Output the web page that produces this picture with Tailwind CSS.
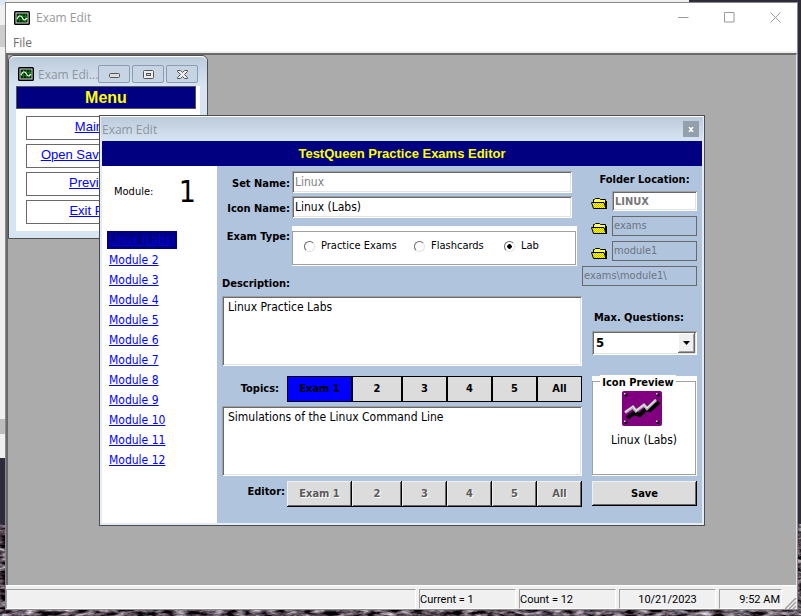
<!DOCTYPE html>
<html lang="en">
<head>
<meta charset="utf-8">
<title>Exam Edit</title>
<script src="https://cdn.jsdelivr.net/npm/@tailwindcss/browser@4"></script>
</head>
<body class="relative h-screen overflow-hidden bg-[#2e2c3b] text-[12px] leading-4 text-black font-['DejaVu_Sans_Condensed','DejaVu_Sans',sans-serif]">

<!-- Desktop wallpaper and the window behind -->
<svg class="absolute inset-0 size-full" aria-hidden="true">
  <filter id="rock" color-interpolation-filters="sRGB"><feTurbulence type="fractalNoise" baseFrequency="0.08 0.25" numOctaves="4" seed="4"/><feColorMatrix values="1.6 0.1 0 0 -0.51  1.6 0 0 0 -0.5  1.6 0 0 0 -0.46  0 0 0 0 1"/></filter>
  <rect y="533" width="100%" height="90" filter="url(#rock)"/>
</svg>
<div class="absolute left-0 top-0 h-[458px] w-[689px] bg-[#f0f0f0]"><div class="h-[5px] w-1.5 bg-[#dce8f5]"></div><div class="mt-5 h-[22px] w-1.5 bg-[#cdcdcd]"></div><div class="mt-[372px] h-[15px] w-1.5 bg-[#bdbdbd]"></div></div>

<!-- Main window -->
<main class="absolute bottom-[6px] left-[5px] right-[3px] top-[2px] flex flex-col border border-[#8a8a8a] bg-[#f0f0f0]">
  <header class="flex h-[29px] shrink-0 items-center bg-white pl-2 font-['Open_Sans',sans-serif] text-[#999]">
    <svg class="mr-1.5 h-[14px] w-4" viewBox="0 0 16 14"><rect width="16" height="14" rx="1.5"/><rect x="1.5" y="1.5" width="13" height="11" fill="#ddd"/><rect x="2.5" y="2.5" width="11" height="9" fill="#002800"/><path d="M5.5 3v8M8.5 3v8M11.500 3v8M3 5.500h10M3 8.500h10" stroke="#008000" /><path d="M3 8L5 5h2l3 4h1l2-2" fill="none" stroke="#fff" stroke-width="1.200"/></svg>
    <h1 class="flex-1">Exam Edit</h1>
    <div class="flex gap-[35px] pr-4">
      <button aria-label="Minimize"><svg class="h-[11px] w-[11px]" viewBox="0 0 11 11"><path d="M0 5.500h10.500" stroke="#999"/></svg></button>
      <button aria-label="Maximize"><svg class="h-[11px] w-[11px]" viewBox="0 0 11 11"><path d="M.5.500h9.500v9.500H.5z" fill="none" stroke="#999"/></svg></button>
      <button aria-label="Close"><svg class="h-[11px] w-[11px]" viewBox="0 0 11 11"><path d="M.5.500l10 10m0-10l-10 10" stroke="#999"/></svg></button>
    </div>
  </header>
  <nav class="flex h-[21px] shrink-0 items-end border-b-2 border-[#f0f0f0] bg-white pl-[7px] font-['Open_Sans',sans-serif] text-[#6d6d6d]"><button>File</button></nav>
  <div class="flex-1 border-l-2 border-r border-t-2 border-l-[#696969] border-r-[#e3e3e3] border-t-[#696969] bg-[#ababab]"></div>
  <footer class="flex h-6 shrink-0 gap-[3px] border-t border-white pt-[3px] font-['Roboto',sans-serif] text-[11px] leading-5">
    <span class="flex-1 border border-b-white border-l-[#a0a0a0] border-r-white border-t-[#a0a0a0]"></span>
    <span class="w-[97px] border border-b-white border-l-[#a0a0a0] border-r-white border-t-[#a0a0a0]">Current = 1</span>
    <span class="w-[97px] border border-b-white border-l-[#a0a0a0] border-r-white border-t-[#a0a0a0]">Count = 12</span>
    <span class="w-[97px] border border-b-white border-l-[#a0a0a0] border-r-white border-t-[#a0a0a0] text-center">10/21/2023</span>
    <span class="w-[63px] border border-b-white border-l-[#a0a0a0] border-r-white border-t-[#a0a0a0] pr-px text-right">9:52 AM</span>
    <svg class="h-[11px] w-[12px] self-end" viewBox="0 0 12 11"><path d="M0 11L11 0M4 11l7-7M8 11l3-3" stroke="#a0a0a0" stroke-width="1.500"/></svg>
  </footer>
</main>

<!-- Menu child window -->
<section class="absolute left-[8px] top-[55px] w-[200px] rounded-t-md border border-[#4d4d4d] bg-[#d7e4f2] pb-[7px] pl-[7px] pr-[7px]">
  <header class="-mx-[7px] flex h-[30px] items-end rounded-t-md border-t border-white bg-linear-to-b from-[#bccbdb] to-[#d7e4f2] pb-[3px] pl-[9px] pr-[9px]">
    <svg class="mb-[2px] mr-1 h-[14px] w-4 shrink-0" viewBox="0 0 16 14"><rect width="16" height="14" rx="1.5"/><rect x="1.5" y="1.5" width="13" height="11" fill="#ddd"/><rect x="2.500" y="2.5" width="11" height="9" fill="#002800"/><path d="M5.5 3v8M8.500 3v8M11.500 3v8M3 5.500h10M3 8.500h10" stroke="#008000" /><path d="M3 8L5 5h2l3 4h1l2-2" fill="none" stroke="#fff" stroke-width="1.200"/></svg>
    <h2 class="min-w-0 flex-1 whitespace-nowrap font-['Open_Sans',sans-serif] text-[#8f959c]">Exam Edi...</h2>
    <div class="flex gap-[2px]">
      <button aria-label="Minimize" class="grid h-[18px] w-8 place-items-center rounded-xs border border-[#8b9bb4] bg-[#c6d4e3]"><svg class="h-[11px] w-[13px]" viewBox="0 0 13 11"><rect x="1.500" y="4.500" width="10" height="4" rx="1" fill="#ddd" stroke="#555"/></svg></button>
      <button aria-label="Restore" class="grid h-[18px] w-8 place-items-center rounded-xs border border-[#8b9bb4] bg-[#c6d4e3]"><svg class="h-[11px] w-[13px]" viewBox="0 0 13 11"><rect x="1.500" y="1.500" width="10" height="8" rx="1" fill="#eee" stroke="#555"/><rect x="4.500" y="4.500" width="4" height="2" fill="#c6d4e3" stroke="#555"/></svg></button>
      <button aria-label="Close" class="grid h-[18px] w-8 place-items-center rounded-xs border border-[#8b9bb4] bg-[#c6d4e3]"><svg class="h-[11px] w-[13px]" viewBox="0 0 13 11"><path d="M1.500 1.500h3l2 2 2-2h3v1l-3 3 3 3v1h-3l-2-2-2 2h-3v-1l3-3-3-3z" fill="#eee" stroke="#555"/></svg></button>
    </div>
  </header>
  <div class="bg-white pb-[7px] font-['Liberation_Sans',sans-serif]">
    <h3 class="mr-1 h-[23px] border border-[#555] bg-[#000080] text-center text-[16px] font-bold leading-[21px] text-[#ff0]">Menu</h3>
    <nav class="flex flex-col gap-1 pl-[10px] pr-3 pt-[7px] text-center text-[13px] leading-5 text-[#00f] underline">
      <a href="#" class="h-6 border border-[#696969]">Main Menu</a>
      <a href="#" class="h-6 border border-[#696969]">Open Saved Exam Set</a>
      <a href="#" class="h-6 border border-[#696969]">Preview Sets</a>
      <a href="#" class="h-6 border border-[#696969]">Exit Program</a>
    </nav>
  </div>
</section>

<!-- Exam editor dialog -->
<section class="absolute left-[99px] top-[115px] w-[606px] border border-[#4d4d4d] bg-[#e4edf7] px-[2px] pb-[2px]">
  <header class="-mx-px flex h-[25px] items-center justify-between border-t border-white bg-linear-to-b from-[#bccbdb] to-[#d7e4f2] pl-px pr-[4px]">
    <h2 class="pt-[2px] font-['Open_Sans',sans-serif] text-[#8f959c]">Exam Edit</h2>
    <button aria-label="Close" class="grid size-4 place-items-center bg-[#939faa]"><svg class="h-[5px] w-[6px]" viewBox="0 0 6 5"><path d="M1 0l4 5M5 0L1 5" stroke="#fff" stroke-width="1.500"/></svg></button>
  </header>
  <h3 class="h-[25px] bg-[#000080] text-center font-['Liberation_Sans',sans-serif] text-[13px] font-bold leading-[25px] text-[#ff0]">TestQueen Practice Exams Editor</h3>
  <div class="flex">
    <aside class="w-[115px] shrink-0 bg-white">
      <div class="flex h-[64px] justify-between pl-3 pr-[21px] text-[11px] leading-[51px]"><span>Module:</span><span class="text-[30px]">1</span></div>
      <nav class="flex flex-col items-start pl-[5px] text-[#00f]">
        <div class="flex h-5 items-center"><a href="#" class="bg-[#000080] px-[2px] py-px text-[#0000d8] underline">Linux (Labs)</a></div>
        <a href="#" class="px-[2px] leading-5 underline">Module 2</a>
        <a href="#" class="px-[2px] leading-5 underline">Module 3</a>
        <a href="#" class="px-[2px] leading-5 underline">Module 4</a>
        <a href="#" class="px-[2px] leading-5 underline">Module 5</a>
        <a href="#" class="px-[2px] leading-5 underline">Module 6</a>
        <a href="#" class="px-[2px] leading-5 underline">Module 7</a>
        <a href="#" class="px-[2px] leading-5 underline">Module 8</a>
        <a href="#" class="px-[2px] leading-5 underline">Module 9</a>
        <a href="#" class="px-[2px] leading-5 underline">Module 10</a>
        <a href="#" class="px-[2px] leading-5 underline">Module 11</a>
        <a href="#" class="px-[2px] leading-5 underline">Module 12</a>
      </nav>
    </aside>
    <form class="flex min-w-0 flex-1 bg-[#b0c4de] pb-4 pl-[5px] pr-[5px]">
      <div class="flex min-w-0 flex-1 flex-col pt-[5px]">
        <div class="flex flex-col gap-[3px] pr-[10px]">
          <div class="flex h-[22px]"><label for="setname" class="w-[70px] shrink-0 pr-[2px] text-right text-[11px] font-bold leading-[26px]">Set Name:</label><input id="setname" value="Linux" readonly class="min-w-0 flex-1 bg-white px-[3px] text-[#808080] shadow-[inset_1px_1px_0_#a0a0a0,inset_-1px_-1px_0_#fff,inset_2px_2px_0_#696969,inset_-2px_-2px_0_#e3e3e3]"></div>
          <div class="flex h-[22px]"><label for="iconname" class="w-[70px] shrink-0 pr-[2px] text-right text-[11px] font-bold leading-[26px]">Icon Name:</label><input id="iconname" value="Linux (Labs)" class="min-w-0 flex-1 bg-white px-[3px] shadow-[inset_1px_1px_0_#a0a0a0,inset_-1px_-1px_0_#fff,inset_2px_2px_0_#696969,inset_-2px_-2px_0_#e3e3e3]"></div>
        </div>
        <div class="mt-2 flex h-10 pr-[5px]" role="radiogroup" aria-labelledby="examtype">
          <span id="examtype" class="w-[70px] shrink-0 pr-[2px] text-right text-[11px] font-bold leading-[22px]">Exam Type:</span>
          <div class="flex-1 bg-white pb-px pr-px pt-[5px]">
            <div class="grid h-full grid-cols-[110px_90px_1fr] items-center border border-[#a0a0a0] pb-1 pl-[11px] text-[11px]">
              <label class="flex items-center gap-[6px]"><input type="radio" name="type" class="size-[11px] appearance-none rounded-full border border-b-[#e3e3e3] border-l-[#696969] border-r-[#e3e3e3] border-t-[#696969] checked:bg-[radial-gradient(circle,#000_2px,#fff_2.5px)]">Practice Exams</label>
              <label class="flex items-center gap-[6px]"><input type="radio" name="type" class="size-[11px] appearance-none rounded-full border border-b-[#e3e3e3] border-l-[#696969] border-r-[#e3e3e3] border-t-[#696969] checked:bg-[radial-gradient(circle,#000_2px,#fff_2.5px)]">Flashcards</label>
              <label class="flex items-center gap-[6px]"><input type="radio" name="type" checked class="size-[11px] appearance-none rounded-full border border-b-[#e3e3e3] border-l-[#696969] border-r-[#e3e3e3] border-t-[#696969] checked:bg-[radial-gradient(circle,#000_2px,#fff_2.5px)]">Lab</label>
            </div>
          </div>
        </div>
        <label for="desc" class="h-[30px] text-[11px] font-bold leading-9">Description:</label>
        <textarea id="desc" class="h-[70px] resize-none bg-white px-[6px] py-[3px] shadow-[inset_1px_1px_0_#a0a0a0,inset_-1px_-1px_0_#fff,inset_2px_2px_0_#696969,inset_-2px_-2px_0_#e3e3e3]">Linux Practice Labs</textarea>
        <div class="mt-[10px] grid h-[26px] grid-cols-[65px_65px_50px_45px_45px_45px_45px] text-[11px] font-bold">
          <label for="topic" class="pr-2 text-right leading-[26px]">Topics:</label>
          <button type="button" class="border border-black bg-[#00f]">Exam 1</button>
          <button type="button" class="border border-black bg-[#dcdcdc]">2</button>
          <button type="button" class="border border-black bg-[#dcdcdc]">3</button>
          <button type="button" class="border border-black bg-[#dcdcdc]">4</button>
          <button type="button" class="border border-black bg-[#dcdcdc]">5</button>
          <button type="button" class="border border-black bg-[#dcdcdc]">All</button>
        </div>
        <textarea id="topic" class="mt-1 h-[70px] resize-none bg-white px-[6px] py-[3px] shadow-[inset_1px_1px_0_#a0a0a0,inset_-1px_-1px_0_#fff,inset_2px_2px_0_#696969,inset_-2px_-2px_0_#e3e3e3]">Simulations of the Linux Command Line</textarea>
        <div class="mt-[5px] grid h-[26px] grid-cols-[65px_65px_50px_45px_45px_45px_45px] text-[11px] font-bold">
          <span class="pr-[2px] text-right leading-[22px]">Editor:</span>
          <button type="button" disabled class="bg-[#dcdcdc] text-[#5a5a5a] shadow-[inset_-1px_-1px_0_#000,inset_1px_1px_0_#f0f0f0,inset_-2px_-2px_0_#696969] text-shadow-[1px_1px_0_#fff]">Exam 1</button>
          <button type="button" disabled class="bg-[#dcdcdc] text-[#5a5a5a] shadow-[inset_-1px_-1px_0_#000,inset_1px_1px_0_#f0f0f0,inset_-2px_-2px_0_#696969] text-shadow-[1px_1px_0_#fff]">2</button>
          <button type="button" disabled class="bg-[#dcdcdc] text-[#5a5a5a] shadow-[inset_-1px_-1px_0_#000,inset_1px_1px_0_#f0f0f0,inset_-2px_-2px_0_#696969] text-shadow-[1px_1px_0_#fff]">3</button>
          <button type="button" disabled class="bg-[#dcdcdc] text-[#5a5a5a] shadow-[inset_-1px_-1px_0_#000,inset_1px_1px_0_#f0f0f0,inset_-2px_-2px_0_#696969] text-shadow-[1px_1px_0_#fff]">4</button>
          <button type="button" disabled class="bg-[#dcdcdc] text-[#5a5a5a] shadow-[inset_-1px_-1px_0_#000,inset_1px_1px_0_#f0f0f0,inset_-2px_-2px_0_#696969] text-shadow-[1px_1px_0_#fff]">5</button>
          <button type="button" disabled class="bg-[#dcdcdc] text-[#5a5a5a] shadow-[inset_-1px_-1px_0_#000,inset_1px_1px_0_#f0f0f0,inset_-2px_-2px_0_#696969] text-shadow-[1px_1px_0_#fff]">All</button>
        </div>
      </div>
      <div class="w-[115px] shrink-0 text-[11px]">
        <label for="folder" class="block h-[25px] pl-[10px] text-center font-bold leading-7">Folder Location:</label>
        <svg width="0" height="0" class="absolute"><defs><pattern id="dots" width="2" height="2" patternUnits="userSpaceOnUse"><rect width="2" height="2" fill="#ff0"/><path d="M0 0h1v1H0zM1 1h1v1H1z" fill="#c0b800"/></pattern><g id="folder-icon"><path d="M2.500 11V2.500h1l1-1h4l1 1h5V11" fill="#ffff60" stroke="#000"/><path d="M.5 5.500h12.500l2 6H2.500z" fill="url(#dots)" stroke="#000"/><path d="M15.500 4v8" stroke="#000"/></g></defs></svg>
        <div class="flex flex-col gap-[5px]">
          <div class="flex h-5 items-end justify-between pl-[9px]"><svg class="mb-[2px] h-3 w-4" viewBox="0 0 16 12"><use href="#folder-icon"/></svg><input id="folder" value="LINUX" readonly class="h-5 w-[85px] bg-white px-[3px] font-bold text-[#777] shadow-[inset_1px_1px_0_#a0a0a0,inset_-1px_-1px_0_#fff,inset_2px_2px_0_#696969,inset_-2px_-2px_0_#e3e3e3]"></div>
          <div class="flex h-5 items-end justify-between pl-[9px]"><svg class="mb-[2px] h-3 w-4" viewBox="0 0 16 12"><use href="#folder-icon"/></svg><input aria-label="Exams folder" value="exams" readonly class="h-5 w-[85px] border border-[#696969] px-px pb-[2px] text-[#6d7480]"></div>
          <div class="flex h-5 items-end justify-between pl-[9px]"><svg class="mb-[2px] h-3 w-4" viewBox="0 0 16 12"><use href="#folder-icon"/></svg><input aria-label="Module folder" value="module1" readonly class="h-5 w-[85px] border border-[#696969] px-px pb-[2px] text-[#6d7480]"></div>
          <input aria-label="Path" value="exams\module1\" readonly class="h-5 w-full border border-[#696969] px-px pb-[2px] text-[#6d7480]">
        </div>
        <div class="pl-[10px]">
          <label for="max" class="block h-[45px] pl-[2px] pt-6 font-bold">Max. Questions:</label>
          <div class="relative h-6">
            <select id="max" class="h-full w-full appearance-none bg-white pl-1 text-[13px] font-bold shadow-[inset_1px_1px_0_#a0a0a0,inset_-1px_-1px_0_#fff,inset_2px_2px_0_#696969,inset_-2px_-2px_0_#e3e3e3]"><option>5</option></select>
            <span class="pointer-events-none absolute bottom-[2px] right-[2px] top-[2px] grid w-[17px] place-items-center bg-[#f0f0f0] shadow-[inset_-1px_-1px_0_#696969,inset_1px_1px_0_#fff,inset_-2px_-2px_0_#a0a0a0]"><svg class="h-1 w-[7px]" viewBox="0 0 7 4"><path d="M0 0h7L3.500 4z"/></svg></span>
          </div>
          <div class="mt-[21px] h-[100px] bg-white pb-px pr-px pt-[5px]">
            <div role="group" aria-labelledby="preview" class="flex h-full flex-col items-center border border-[#a0a0a0] pr-1">
              <h4 id="preview" class="-mt-[7px] mr-2 bg-white px-[2px] font-bold leading-4">Icon Preview</h4>
              <svg class="h-[35px] w-10" viewBox="0 0 40 35"><rect width="40" height="35" rx="2" fill="#800080"/><path d="M5 27l7-5 6 2 6-6 4 1 9-8" fill="none" stroke="#000" stroke-width="4"/><path d="M3 21.500l8-5.500 3 4 8-6 3 3.500 9-8.500" fill="none" stroke="#b8b8b8" stroke-width="3"/><path d="M3 21l8-6 3 4.500 8-6 3 3.500 9-8.500" fill="none" stroke="#eee" stroke-width="1"/><g fill="#000"><circle cx="4" cy="4" r="1.500"/><circle cx="36" cy="4" r="1.500"/><circle cx="4" cy="31.500" r="1.500"/><circle cx="36" cy="31.500" r="1.500"/></g><g fill="#ddd"><path d="M2 2h1.500v1.500H2zM34 2h1.500v1.500H34zM2 29.500h1.500V31H2zM34 29.500h1.500V31H34z"/></g></svg>
              <p class="mt-[6px] pl-1 text-[12px]">Linux (Labs)</p>
            </div>
          </div>
          <button type="button" class="mt-[5px] h-[25px] w-full bg-[#dcdcdc] font-bold shadow-[inset_-1px_-1px_0_#000,inset_1px_1px_0_#f0f0f0,inset_-2px_-2px_0_#696969]">Save</button>
        </div>
      </div>
    </form>
  </div>
</section>
</body>
</html>
